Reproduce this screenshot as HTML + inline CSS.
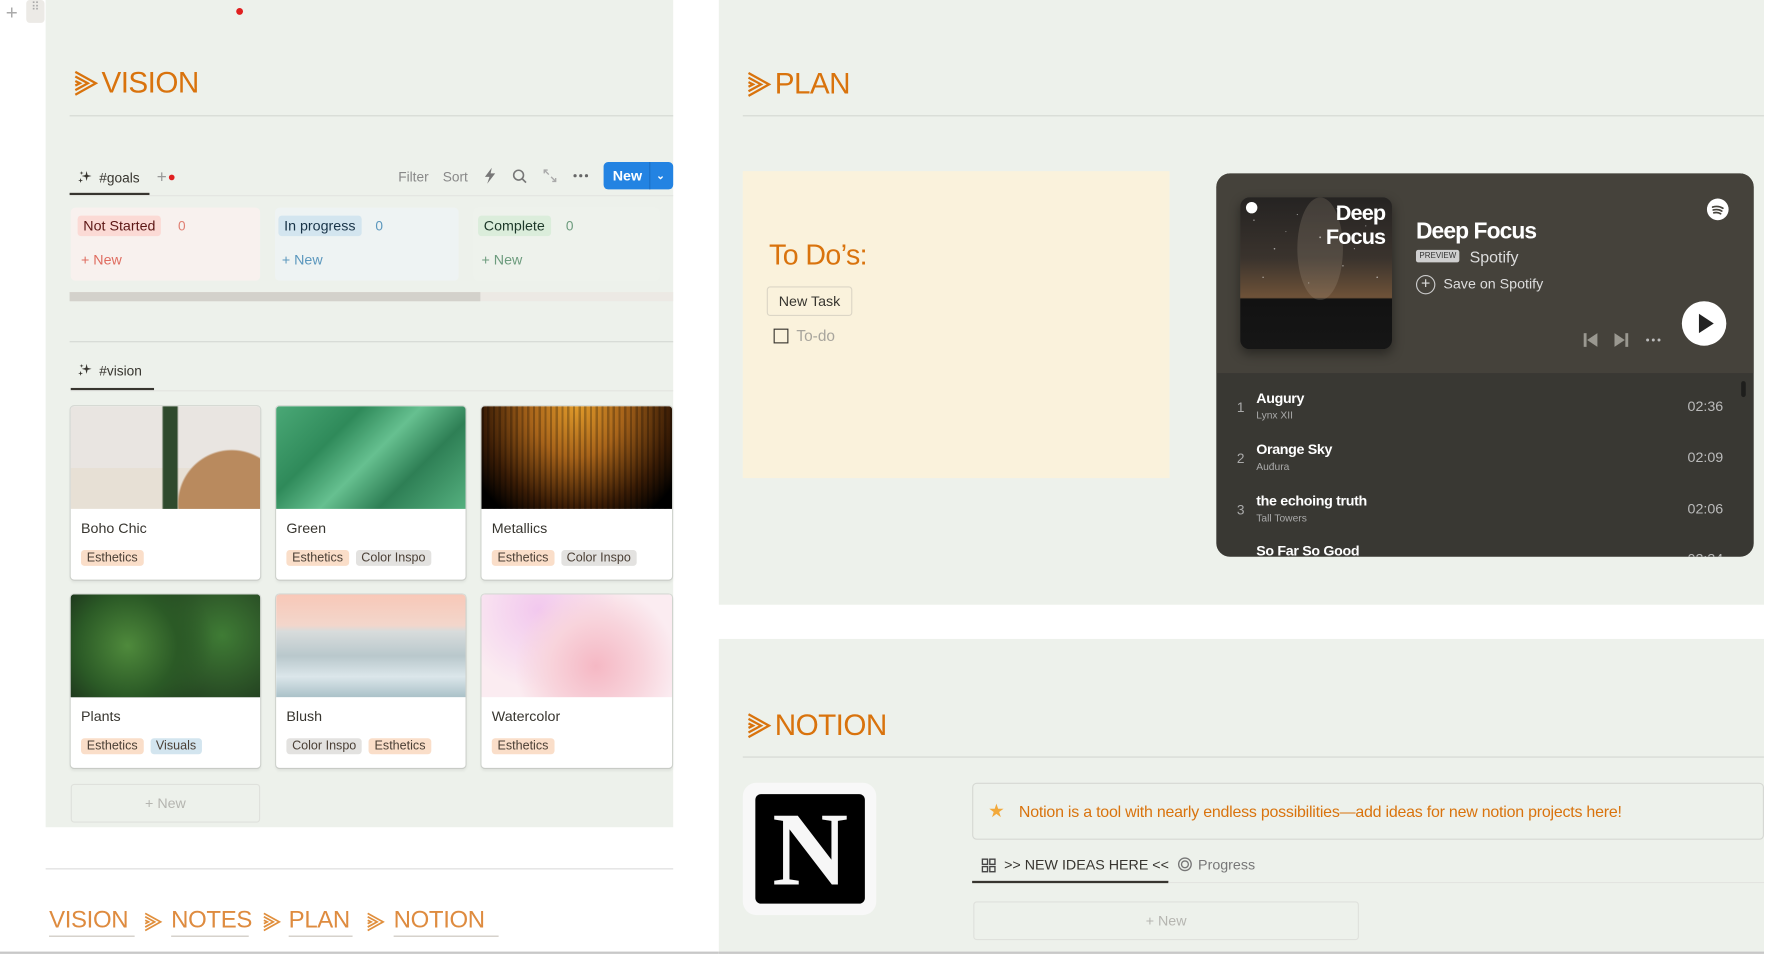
<!DOCTYPE html>
<html><head><meta charset="utf-8">
<style>
*{margin:0;padding:0;box-sizing:border-box}
html,body{width:1789px;height:954px;overflow:hidden;background:#fff}
body{font-family:"Liberation Sans",sans-serif;color:#37352f}
#w{position:absolute;left:0;top:0;width:1568px;height:836px;transform:scale(1.141);transform-origin:0 0}
.a{position:absolute}
.panel{background:#edf1eb}
.h{color:#d9730d;font-size:26px;letter-spacing:-0.5px;display:flex;align-items:center;gap:3px}
.line{height:1px;background:#d5d8d3}
.t{font-size:12px;color:#37352f}
.tag{display:inline-block;font-size:11px;padding:1px 5px;border-radius:3px;margin-right:6px;color:#4a3f35}
.es{background:#fadec9}.ci{background:#e3e2e0}.vi{background:#d3e5ef}
.card{background:#fff;border-radius:3px;box-shadow:0 0 0 1px rgba(15,15,15,.1),0 2px 3px rgba(15,15,15,.08);overflow:hidden}
.card .img{height:90px}
.card .ti{font-size:12.5px;margin:10px 0 0 9px}
.card .tg{margin:9px 0 0 9px}
.col{border-radius:4px}
.nav{position:absolute;top:795px;color:#de8b3f;font-size:21px;border-bottom:1px solid #c9c4bc;padding-bottom:1px;letter-spacing:-0.3px}
.wt{color:#fff}
</style></head><body><div id="w">
<svg width="0" height="0" style="position:absolute"><defs>
<symbol id="arr" viewBox="0 0 22 24"><g fill="none" stroke="#d9730d" stroke-width="2"><polyline points="2,2 20,12 2,22"/><polyline points="2,6 13,12 2,18"/><polyline points="2,10 6,12 2,14"/></g></symbol>
<symbol id="sp" viewBox="0 0 16 16"><path d="M9 1 L10 5 L14 6 L10 7 L9 11 L8 7 L4 6 L8 5Z M3 8 L3.6 10 L5.5 10.5 L3.6 11 L3 13 L2.4 11 L0.5 10.5 L2.4 10Z M4 1 L4.4 2.5 L6 3 L4.4 3.5 L4 5 L3.6 3.5 L2 3 L3.6 2.5Z" fill="#37352f"/></symbol>
</defs></svg>

<div class="a" style="left:5px;top:2px;font-size:18px;color:#aaa;line-height:18px">+</div>
<div class="a" style="left:23px;top:0;width:16px;height:20px;background:#eceae6;border-radius:3px;color:#aaa;font-size:10px;text-align:center;line-height:9px;padding-top:2px">⠿</div>

<div class="a panel" style="left:40px;top:0;width:550px;height:725px"></div>
<div class="a" style="left:207px;top:7px;width:6px;height:6px;border-radius:3px;background:#e02020"></div>
<div class="a h" style="left:64px;top:57px"><svg width="22" height="24"><use href="#arr"/></svg>VISION</div>
<div class="a line" style="left:61px;top:101px;width:529px"></div>

<div class="a t" style="left:68px;top:147px;display:flex;align-items:center;gap:5px"><svg width="14" height="14"><use href="#sp"/></svg>#goals<span style="margin-left:10px;color:#999;font-size:15px">+</span><span style="width:5px;height:5px;border-radius:3px;background:#e02020;display:inline-block;margin-left:-3px"></span></div>
<div class="a" style="left:61px;top:169px;width:70px;height:2px;background:#37352f"></div>
<div class="a line" style="left:61px;top:171px;width:529px;background:#e3e4e0"></div>
<div class="a t" style="left:349px;top:148px;color:#888">Filter</div>
<div class="a t" style="left:388px;top:148px;color:#888">Sort</div>
<svg class="a" style="left:424px;top:147px" width="11" height="14"><path d="M7 0L1 8H5L3 14L10 5H6Z" fill="#777"/></svg>
<svg class="a" style="left:449px;top:148px" width="13" height="13"><circle cx="5.5" cy="5.5" r="4.3" fill="none" stroke="#777" stroke-width="1.4"/><line x1="8.6" y1="8.6" x2="12" y2="12" stroke="#777" stroke-width="1.5"/></svg>
<svg class="a" style="left:476px;top:148px" width="12" height="12"><path d="M1 4V1H4M1 1L5 5M11 8V11H8M11 11L7 7" stroke="#aaa" fill="none" stroke-width="1.2"/></svg>
<svg class="a" style="left:502px;top:152px" width="14" height="4"><circle cx="2" cy="2" r="1.4" fill="#666"/><circle cx="7" cy="2" r="1.4" fill="#666"/><circle cx="12" cy="2" r="1.4" fill="#666"/></svg>
<div class="a" style="left:529px;top:142px;width:61px;height:24px;background:#2383e2;border-radius:4px;color:#fff;font-size:12.5px;font-weight:bold;line-height:24px;padding-left:8px">New<span style="position:absolute;left:40px;top:0;width:1px;height:24px;background:#1a6fc4"></span><span style="position:absolute;left:46px;top:0;font-size:9px">⌄</span></div>

<div class="a col" style="left:62px;top:182px;width:166px;height:64px;background:#f8f1ee"></div>
<div class="a" style="left:68px;top:189px;background:#fbdad5;border-radius:3px;font-size:12.5px;padding:2px 5px;color:#5d1715">Not Started</div>
<div class="a" style="left:156px;top:191px;font-size:12px;color:#e07f72">0</div>
<div class="a" style="left:71px;top:221px;font-size:12.5px;color:#df6c5f">+ New</div>
<div class="a col" style="left:241px;top:182px;width:161px;height:64px;background:#eef3f3"></div>
<div class="a" style="left:244px;top:189px;background:#d3e5ef;border-radius:3px;font-size:12.5px;padding:2px 5px;color:#183347">In progress</div>
<div class="a" style="left:329px;top:191px;font-size:12px;color:#5b97bd">0</div>
<div class="a" style="left:247px;top:221px;font-size:12.5px;color:#5b97bd">+ New</div>
<div class="a col" style="left:415px;top:182px;width:163px;height:64px;background:#eef2ec"></div>
<div class="a" style="left:419px;top:189px;background:#dbeddb;border-radius:3px;font-size:12.5px;padding:2px 5px;color:#1c3829">Complete</div>
<div class="a" style="left:496px;top:191px;font-size:12px;color:#6c9b7d">0</div>
<div class="a" style="left:422px;top:221px;font-size:12.5px;color:#6c9b7d">+ New</div>
<div class="a" style="left:61px;top:256px;width:529px;height:8px;background:#ece9e4"></div>
<div class="a" style="left:61px;top:256px;width:360px;height:8px;background:#d3d1cb"></div>

<div class="a line" style="left:61px;top:299px;width:529px"></div>
<div class="a t" style="left:68px;top:318px;display:flex;align-items:center;gap:5px"><svg width="14" height="14"><use href="#sp"/></svg>#vision</div>
<div class="a" style="left:62px;top:340px;width:73px;height:2px;background:#37352f"></div>
<div class="a line" style="left:62px;top:342px;width:528px;background:#e3e4e0"></div>

<div class="a card" style="left:62px;top:356px;width:166px;height:152px"><div class="img" style="background:radial-gradient(circle at 85% 95%,#b98a5e 0 28%,transparent 29%),linear-gradient(90deg,transparent 0 48%,#2f4a2d 49% 56%,transparent 57%),linear-gradient(180deg,#e9e5e1 0 60%,#e7e0d5 60% 100%)"></div><div class="ti">Boho Chic</div><div class="tg"><span class="tag es">Esthetics</span></div></div>
<div class="a card" style="left:242px;top:356px;width:166px;height:152px"><div class="img" style="background:linear-gradient(135deg,#4aa876,#2f8a5a 30%,#66c090 50%,#2e7f55 70%,#55b07f)"></div><div class="ti">Green</div><div class="tg"><span class="tag es">Esthetics</span><span class="tag ci">Color Inspo</span></div></div>
<div class="a card" style="left:422px;top:356px;width:167px;height:152px"><div class="img" style="background:repeating-linear-gradient(90deg,rgba(0,0,0,.25) 0 2px,transparent 2px 5px),radial-gradient(ellipse at 50% 0%,#e09a2a 0,#a8641a 35%,#3a1c05 70%,#000 90%)"></div><div class="ti">Metallics</div><div class="tg"><span class="tag es">Esthetics</span><span class="tag ci">Color Inspo</span></div></div>

<div class="a card" style="left:62px;top:521px;width:166px;height:152px"><div class="img" style="background:radial-gradient(circle at 30% 50%,#4f8a3c 0,#2b5a26 35%,transparent 60%),radial-gradient(circle at 80% 40%,#3f7c35,#1a2e1a 60%),#1d2f1e"></div><div class="ti">Plants</div><div class="tg"><span class="tag es">Esthetics</span><span class="tag vi">Visuals</span></div></div>
<div class="a card" style="left:242px;top:521px;width:166px;height:152px"><div class="img" style="background:linear-gradient(180deg,#f8c8b8 0,#f3d6cb 30%,#d8dcdc 36%,#b9c8cc 60%,#dbe6ea 80%,#aac1c8 100%)"></div><div class="ti">Blush</div><div class="tg"><span class="tag ci">Color Inspo</span><span class="tag es">Esthetics</span></div></div>
<div class="a card" style="left:422px;top:521px;width:167px;height:152px"><div class="img" style="background:radial-gradient(circle at 60% 70%,#f5b8c4 0,#f8d4dc 35%,transparent 60%),radial-gradient(circle at 30% 15%,#f2c8ee,transparent 50%),#fbecf1"></div><div class="ti">Watercolor</div><div class="tg"><span class="tag es">Esthetics</span></div></div>

<div class="a" style="left:62px;top:687px;width:166px;height:34px;border:1px solid #dfe1dc;border-radius:3px;text-align:center;line-height:32px;font-size:12.5px;color:#b5b5b0">+ New</div>

<div class="a line" style="left:40px;top:761px;width:550px;background:#dcdcdc"></div>
<span class="nav" style="left:43px;width:75px">VISION</span><svg class="a" style="left:125px;top:799px;opacity:.8" width="18" height="18"><use href="#arr"/></svg>
<span class="nav" style="left:150px;width:68px">NOTES</span><svg class="a" style="left:229px;top:799px;opacity:.8" width="18" height="18"><use href="#arr"/></svg>
<span class="nav" style="left:253px;width:56px">PLAN</span><svg class="a" style="left:320px;top:799px;opacity:.8" width="18" height="18"><use href="#arr"/></svg>
<span class="nav" style="left:345px;width:92px">NOTION</span>
<div class="a" style="left:0;top:834px;width:630px;height:2px;background:#c8c8c8"></div>

<div class="a panel" style="left:630px;top:0;width:916px;height:530px"></div>
<div class="a h" style="left:654px;top:58px"><svg width="22" height="24"><use href="#arr"/></svg>PLAN</div>
<div class="a line" style="left:651px;top:101px;width:895px"></div>
<div class="a" style="left:651px;top:150px;width:374px;height:269px;background:#faf2dc"></div>
<div class="a" style="left:674px;top:210px;color:#d9730d;font-size:25px;letter-spacing:-0.5px">To Do’s:</div>
<div class="a" style="left:672px;top:251px;width:75px;height:26px;border:1px solid #dcd6c6;border-radius:3px;font-size:12.5px;line-height:24px;text-align:center;color:#37352f">New Task</div>
<div class="a" style="left:678px;top:288px;width:13px;height:13px;border:1.5px solid #37352f"></div>
<div class="a" style="left:698px;top:287px;font-size:13.5px;color:#a8a59d">To-do</div>

<div class="a" style="left:1066px;top:152px;width:471px;height:336px;border-radius:12px;overflow:hidden;background:#393833">
 <div class="a" style="left:0;top:0;width:471px;height:175px;background:#45423b"></div>
 <div class="a" style="left:21px;top:21px;width:133px;height:133px;border-radius:8px;overflow:hidden;box-shadow:0 4px 10px rgba(0,0,0,.4);background:linear-gradient(180deg,#252322 0,#3a332d 40%,#6e5238 66%,#121212 67%,#161616 100%)">
  <svg class="a" style="left:0;top:0" width="133" height="90"><g fill="#fff" opacity=".6"><circle cx="12" cy="20" r=".6"/><circle cx="30" cy="45" r=".7"/><circle cx="50" cy="15" r=".5"/><circle cx="70" cy="35" r=".8"/><circle cx="90" cy="60" r=".6"/><circle cx="110" cy="25" r=".5"/><circle cx="20" cy="70" r=".6"/><circle cx="60" cy="75" r=".5"/><circle cx="85" cy="10" r=".6"/><circle cx="120" cy="70" r=".7"/><circle cx="40" cy="30" r=".4"/><circle cx="100" cy="45" r=".5"/></g><ellipse cx="70" cy="45" rx="20" ry="45" fill="rgba(200,185,160,.18)"/></svg>
  <div class="a" style="left:5px;top:4px;width:10px;height:10px;border-radius:5px;background:#fff"></div>
  <div class="a wt" style="right:6px;top:4px;font-size:19px;font-weight:bold;text-align:right;line-height:21px;letter-spacing:-0.8px">Deep<br>Focus</div>
 </div>
 <div class="a wt" style="left:175px;top:40px;font-size:20px;font-weight:bold;letter-spacing:-0.8px">Deep Focus</div>
 <div class="a" style="left:175px;top:67px;background:#cfcfcf;color:#333;font-size:7px;padding:2px 3px;border-radius:2px">PREVIEW</div>
 <div class="a" style="left:222px;top:65px;color:#ddd;font-size:14px">Spotify</div>
 <div class="a" style="left:175px;top:89px;width:17px;height:17px;border:1.5px solid #ccc;border-radius:50%;color:#ddd;font-size:14px;line-height:13px;text-align:center">+</div>
 <div class="a" style="left:199px;top:90px;color:#ddd;font-size:12.5px">Save on Spotify</div>
 <div class="a" style="left:430px;top:22px;width:19px;height:19px;border-radius:50%;background:#fff"><svg width="19" height="19"><path d="M5 7.5Q10 6 14 8.5M5.5 10Q10 9 13 11M6 12.5Q9.5 11.8 12 13.3" stroke="#45423b" stroke-width="1.5" fill="none" stroke-linecap="round"/></svg></div>
 <svg class="a" style="left:321px;top:139px" width="14" height="14"><rect x="1" y="1" width="2.5" height="12" fill="#9a9890"/><path d="M13 1V13L4 7Z" fill="#9a9890"/></svg>
 <svg class="a" style="left:348px;top:139px" width="14" height="14"><rect x="10.5" y="1" width="2.5" height="12" fill="#9a9890"/><path d="M1 1V13L10 7Z" fill="#9a9890"/></svg>
 <svg class="a" style="left:376px;top:144px" width="14" height="4"><circle cx="2" cy="2" r="1.3" fill="#bbb"/><circle cx="7" cy="2" r="1.3" fill="#bbb"/><circle cx="12" cy="2" r="1.3" fill="#bbb"/></svg>
 <div class="a" style="left:408px;top:112px;width:39px;height:39px;border-radius:50%;background:#fff"><svg width="39" height="39"><path d="M15 11L28 19.5L15 28Z" fill="#222"/></svg></div>
 <div class="a" style="left:460px;top:182px;width:4px;height:14px;border-radius:2px;background:#1e1e1c"></div>
 <div class="a" style="left:18px;top:198px;color:#aaa;font-size:12px">1</div>
 <div class="a wt" style="left:35px;top:190px;font-size:12.5px;font-weight:bold;letter-spacing:-0.3px">Augury</div>
 <div class="a" style="left:35px;top:207px;color:#aaa;font-size:9px">Lynx XII</div>
 <div class="a" style="left:413px;top:197px;color:#bbb;font-size:12.5px">02:36</div>
 <div class="a" style="left:18px;top:243px;color:#aaa;font-size:12px">2</div>
 <div class="a wt" style="left:35px;top:235px;font-size:12.5px;font-weight:bold;letter-spacing:-0.3px">Orange Sky</div>
 <div class="a" style="left:35px;top:252px;color:#aaa;font-size:9px">Auđura</div>
 <div class="a" style="left:413px;top:242px;color:#bbb;font-size:12.5px">02:09</div>
 <div class="a" style="left:18px;top:288px;color:#aaa;font-size:12px">3</div>
 <div class="a wt" style="left:35px;top:280px;font-size:12.5px;font-weight:bold;letter-spacing:-0.3px">the echoing truth</div>
 <div class="a" style="left:35px;top:297px;color:#aaa;font-size:9px">Tall Towers</div>
 <div class="a" style="left:413px;top:287px;color:#bbb;font-size:12.5px">02:06</div>
 <div class="a wt" style="left:35px;top:324px;font-size:12.5px;font-weight:bold;letter-spacing:-0.3px">So Far So Good</div>
 <div class="a" style="left:413px;top:331px;color:#bbb;font-size:12.5px">02:34</div>
</div>

<div class="a panel" style="left:630px;top:560px;width:916px;height:276px"></div>
<div class="a h" style="left:654px;top:620px"><svg width="22" height="24"><use href="#arr"/></svg>NOTION</div>
<div class="a line" style="left:651px;top:663px;width:895px"></div>
<div class="a" style="left:651px;top:686px;width:117px;height:116px;background:#f8f8f8;border-radius:12px"></div>
<div class="a" style="left:662px;top:696px;width:96px;height:96px;background:#000;border-radius:5px;color:#f7f7f7;font-family:'Liberation Serif',serif;font-weight:bold;font-size:92px;line-height:96px;text-align:center">N</div>
<div class="a" style="left:852px;top:686px;width:694px;height:50px;border:1px solid #d6d8d3;border-radius:4px"></div>
<div class="a" style="left:866px;top:701px;color:#f2a93b;font-size:16px">★</div>
<div class="a" style="left:893px;top:703px;color:#d9730d;font-size:14px;letter-spacing:-0.2px">Notion is a tool with nearly endless possibilities—add ideas for new notion projects here!</div>
<svg class="a" style="left:860px;top:752px" width="13" height="13"><g fill="none" stroke="#444" stroke-width="1.2"><rect x="1" y="1" width="4.5" height="4.5"/><rect x="7.5" y="1" width="4.5" height="4.5"/><rect x="1" y="7.5" width="4.5" height="4.5"/><rect x="7.5" y="7.5" width="4.5" height="4.5"/></g></svg>
<div class="a" style="left:880px;top:751px;font-size:12.5px;color:#37352f">&gt;&gt; NEW IDEAS HERE &lt;&lt;</div>
<svg class="a" style="left:1032px;top:751px" width="13" height="13"><g fill="none" stroke="#777" stroke-width="1.2"><circle cx="6.5" cy="6.5" r="5.5"/><circle cx="6.5" cy="6.5" r="3"/></g></svg>
<div class="a" style="left:1050px;top:751px;font-size:12.5px;color:#777">Progress</div>
<div class="a" style="left:852px;top:772px;width:172px;height:2px;background:#37352f"></div>
<div class="a line" style="left:1024px;top:773px;width:522px;background:#e3e4e0"></div>
<div class="a" style="left:853px;top:790px;width:338px;height:34px;border:1px solid #dfe1dc;border-radius:3px;text-align:center;line-height:32px;font-size:12.5px;color:#b5b5b0">+ New</div>
<div class="a" style="left:630px;top:834px;width:916px;height:2px;background:#c8c8c8"></div>
</div></body></html>
